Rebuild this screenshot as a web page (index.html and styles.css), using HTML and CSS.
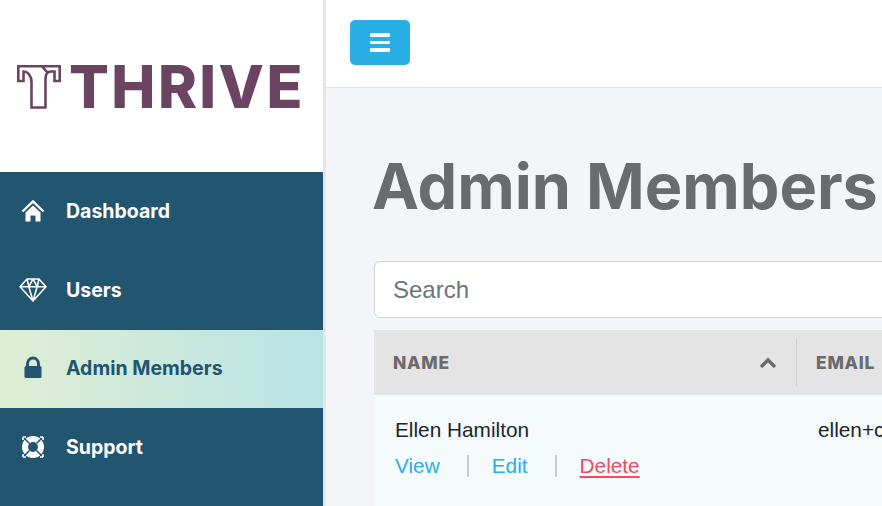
FILE: index.html
```html
<!DOCTYPE html>
<html lang="en">
<head>
<meta charset="utf-8">
<title>Admin Members</title>
<link rel="stylesheet" href="styles.css">
</head>
<body>
<div class="app">
  <aside class="sidebar">
    <div class="brand">
      <svg class="brand-mark" viewBox="0 0 44 44" aria-hidden="true">
        <path d="M1.3 1.3 H42.7 V16 H37.5 V6.5 H34 C30 6.5 28.5 10 28.5 14 V42.5 H14.5 V17 C14.5 11 11 6.5 6.5 6.5 V16 H1.3 Z M25 1.3 L31 8" fill="none" stroke="#6b4462" stroke-width="2.6"/>
      </svg>
      <span class="brand-name">THRIVE</span>
    </div>
    <nav class="nav">
      <a class="nav-item">
        <svg class="nav-icon" viewBox="0 0 30 24" aria-hidden="true"><path d="M4.5 12.5 L15 2.5 L25.5 12.5" fill="none" stroke="#fff" stroke-width="2.4"/><path d="M7.5 13.4 L15 6.4 L22.5 13.4 V22.5 H17.5 V16.5 H12.5 V22.5 H7.5 Z" fill="#fff"/></svg>
        <span>Dashboard</span>
      </a>
      <a class="nav-item">
        <svg class="nav-icon" viewBox="0 0 30 26" aria-hidden="true"><path d="M8.5 1 H21.5 L29 9.5 L15 25 L1 9.5 Z M1 9.5 H29 M8.5 1 L10.5 9.5 L15 25 L19.5 9.5 L21.5 1 M10.5 9.5 L15 1 L19.5 9.5" fill="none" stroke="#fff" stroke-width="1.7" stroke-linejoin="round"/></svg>
        <span>Users</span>
      </a>
      <a class="nav-item is-active">
        <svg class="nav-icon" viewBox="0 0 30 24" aria-hidden="true"><path d="M9.5 10 V8 C9.5 4.5 12 2 15 2 C18 2 20.5 4.5 20.5 8 V10" fill="none" stroke="#215570" stroke-width="3"/><rect x="6.5" y="10" width="17" height="12" rx="1.5" fill="#215570"/></svg>
        <span>Admin Members</span>
      </a>
      <a class="nav-item">
        <svg class="nav-icon" viewBox="0 0 30 24" aria-hidden="true"><circle cx="15" cy="12" r="8" fill="none" stroke="#fff" stroke-width="6"/><path d="M6.5 3.5 L11.5 8.5 M23.5 3.5 L18.5 8.5 M6.5 20.5 L11.5 15.5 M23.5 20.5 L18.5 15.5" stroke="#215570" stroke-width="1.5"/><path d="M5 2 H8 M5 2 V5 M25 2 H22 M25 2 V5 M5 22 H8 M5 22 V19 M25 22 H22 M25 22 V19" stroke="#fff" stroke-width="1.6"/></svg>
        <span>Support</span>
      </a>
    </nav>
  </aside>
  <div class="content">
    <header class="topbar">
      <button class="menu-btn" type="button" aria-label="Toggle menu"><span></span><span></span><span></span></button>
    </header>
    <main class="main">
      <h1 class="title">Admin Members</h1>
      <input class="search" type="text" placeholder="Search">
      <div class="table">
        <div class="thead">
          <div class="th th-name">
            <span>NAME</span>
            <svg class="sort" viewBox="0 0 18 12" aria-hidden="true"><path d="M2 10 L9 3 L16 10" fill="none" stroke="#6a6b6d" stroke-width="3.4"/></svg>
          </div>
          <div class="th th-email"><span>EMAIL</span></div>
        </div>
        <div class="row">
          <div class="cell-name">
            <div class="person">Ellen Hamilton</div>
            <div class="actions">
              <a class="link">View</a><span class="sep"></span>
              <a class="link">Edit</a><span class="sep"></span>
              <a class="link danger">Delete</a>
            </div>
          </div>
          <div class="cell-email">ellen+cole@thrive.com</div>
        </div>
      </div>
    </main>
  </div>
</div>
</body>
</html>
```

FILE: styles.css
```css
* { box-sizing: border-box; }
html, body { margin: 0; height: 100%; overflow: hidden; }
body { font-family: "Liberation Sans", Arial, sans-serif; color: #212529; }
.app { display: flex; width: 882px; height: 506px; overflow: hidden; }

.sidebar { flex: 0 0 326px; height: 506px; background: #215570; border-right: 3px solid #e6e6e8; display: flex; flex-direction: column; }
.brand { flex: 0 0 172px; background: #fff; display: flex; align-items: center; padding: 1px 0 0 17px; gap: 8px; }
.brand-mark { width: 44px; height: 44px; flex: none; }
.brand-name { font-family: Inter, sans-serif; font-weight: 800; font-size: 59px; line-height: 1; color: #6b4462; letter-spacing: 2.4px; }

.nav { display: flex; flex-direction: column; }
.nav-item { height: 78.75px; display: flex; align-items: center; padding: 0 0 1px 18px; gap: 18px; color: #fff; font-family: Inter, sans-serif; font-weight: 700; font-size: 19.5px; }
.nav-icon { width: 30px; height: 24px; flex: none; }
.is-active { background: linear-gradient(90deg, #dfeed3 0%, #b8e3e6 100%); color: #215570; }

.content { flex: 1; min-width: 0; display: flex; flex-direction: column; background: #f4f5f9; }
.topbar { flex: 0 0 88px; background: #fff; border-bottom: 1px solid #e4e4e6; padding: 20px 0 0 24px; }
.menu-btn { width: 60px; height: 45px; border: 0; border-radius: 5px; background: #29aee6; display: flex; flex-direction: column; align-items: center; justify-content: center; gap: 4px; padding: 0; }
.menu-btn span { display: block; width: 20px; height: 3.5px; background: #fff; border-radius: 1px; }

.main { flex: 1; padding: 0 0 0 48px; min-width: 0; }
.title { margin: 60px 0 0 -2px; font-family: Inter, sans-serif; font-weight: 700; font-size: 63px; line-height: 76px; color: #6a6b6d; white-space: nowrap; }
.search { display: block; width: 620px; height: 57px; margin-top: 37px; border: 1px solid #ced4da; border-radius: 6px; background: #fff; padding: 0 18px; font-family: "Liberation Sans", Arial, sans-serif; font-size: 24px; outline: 0; }
.search::placeholder { color: #6c757d; opacity: 1; }

.table { width: 700px; margin-top: 12px; }
.thead { display: flex; height: 65px; background: #e4e4e4; padding-top: 9px; }
.th { font-family: Inter, sans-serif; font-weight: 800; font-size: 17.4px; letter-spacing: 0.8px; color: #6a6b6d; display: flex; align-items: center; height: 47px; }
.th-name { flex: 0 0 423px; padding: 0 19px; justify-content: space-between; border-right: 1px solid #cfcfcf; }
.th-email { padding-left: 19px; }
.sort { width: 18px; height: 12px; flex: none; }

.row { display: flex; height: 111px; background: #f5fafd; }
.cell-name { flex: 0 0 423px; padding: 23px 0 0 21px; }
.person, .cell-email { font-size: 20.8px; line-height: 24px; white-space: nowrap; }
.cell-email { padding: 23px 0 0 21px; }
.actions { display: flex; align-items: center; margin-top: 12px; height: 24px; }
.link { font-size: 20.8px; line-height: 24px; color: #29aee6; }
.danger { color: #ee4b63; text-decoration: underline; text-decoration-thickness: 2px; text-underline-offset: 3px; }
.sep { width: 2px; height: 22px; background: #c9cccd; margin: 0 23px 0 27px; }
```
